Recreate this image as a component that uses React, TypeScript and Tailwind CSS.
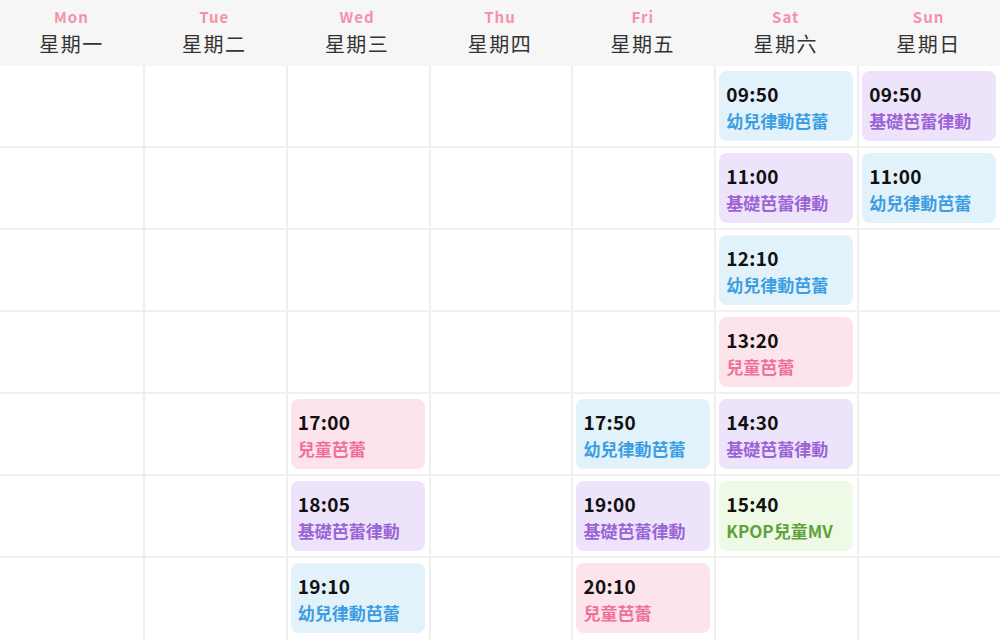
const days = [
  { en: 'Mon', zh: '星期一' },
  { en: 'Tue', zh: '星期二' },
  { en: 'Wed', zh: '星期三' },
  { en: 'Thu', zh: '星期四' },
  { en: 'Fri', zh: '星期五' },
  { en: 'Sat', zh: '星期六' },
  { en: 'Sun', zh: '星期日' },
];

type Kind = 'blue' | 'purple' | 'pink' | 'green';

const kinds: Record<Kind, { box: string; text: string }> = {
  blue: { box: 'bg-[#e2f2fa]', text: 'text-[#3b9de2]' },
  purple: { box: 'bg-[#ede3fa]', text: 'text-[#9b63d6]' },
  pink: { box: 'bg-[#fde3ea]', text: 'text-[#f0709a]' },
  green: { box: 'bg-[#effae6]', text: 'text-[#5ea33a]' },
};

type Lesson = { time: string; name: string; kind: Kind };

const BABY: [string, Kind] = ['幼兒律動芭蕾', 'blue'];
const BASIC: [string, Kind] = ['基礎芭蕾律動', 'purple'];
const KIDS: [string, Kind] = ['兒童芭蕾', 'pink'];
const KPOP: [string, Kind] = ['KPOP兒童MV', 'green'];

const l = (time: string, c: [string, Kind]): Lesson => ({ time, name: c[0], kind: c[1] });

// schedule[row][col]
const schedule: (Lesson | null)[][] = [
  [null, null, null, null, null, l('09:50', BABY), l('09:50', BASIC)],
  [null, null, null, null, null, l('11:00', BASIC), l('11:00', BABY)],
  [null, null, null, null, null, l('12:10', BABY), null],
  [null, null, null, null, null, l('13:20', KIDS), null],
  [null, null, l('17:00', KIDS), null, l('17:50', BABY), l('14:30', BASIC), null],
  [null, null, l('18:05', BASIC), null, l('19:00', BASIC), l('15:40', KPOP), null],
  [null, null, l('19:10', BABY), null, l('20:10', KIDS), null, null],
];

function Card({ lesson }: { lesson: Lesson }) {
  const k = kinds[lesson.kind];
  return (
    <div className={`h-[70px] rounded-[8px] pl-[7px] pt-[9px] ${k.box}`}>
      <div className="text-[19px] leading-[27px] font-bold tracking-[0.3px] text-[#111]">{lesson.time}</div>
      <div className={`text-[17px] leading-[28px] font-bold ${k.text}`}>{lesson.name}</div>
    </div>
  );
}

export default function App() {
  return (
    <div
      className="w-[1000px] h-[640px] overflow-hidden bg-white"
      style={{ fontFamily: '"Noto Sans CJK TC", "Noto Sans", sans-serif' }}
    >
      <div className="grid grid-cols-7 h-[66px] bg-[#f6f6f6]">
        {days.map((d) => (
          <div key={d.en} className="flex flex-col items-center pt-[6px]">
            <span className="text-[15px] leading-[22px] font-bold tracking-[1px] text-[#f592aa]">{d.en}</span>
            <span className="text-[20px] leading-[32px] tracking-[1.5px] text-[#333]">{d.zh}</span>
          </div>
        ))}
      </div>
      {schedule.map((row, r) => (
        <div
          key={r}
          className={`grid grid-cols-7 h-[82px] ${r < schedule.length - 1 ? 'border-b-2 border-[#f0f0f0]' : ''}`}
        >
          {row.map((cell, c) => (
            <div
              key={c}
              className={`pt-[5px] pl-[3px] pr-[4px] ${c > 0 ? 'border-l-2 border-[#efefef]' : ''}`}
            >
              {cell && <Card lesson={cell} />}
            </div>
          ))}
        </div>
      ))}
    </div>
  );
}
